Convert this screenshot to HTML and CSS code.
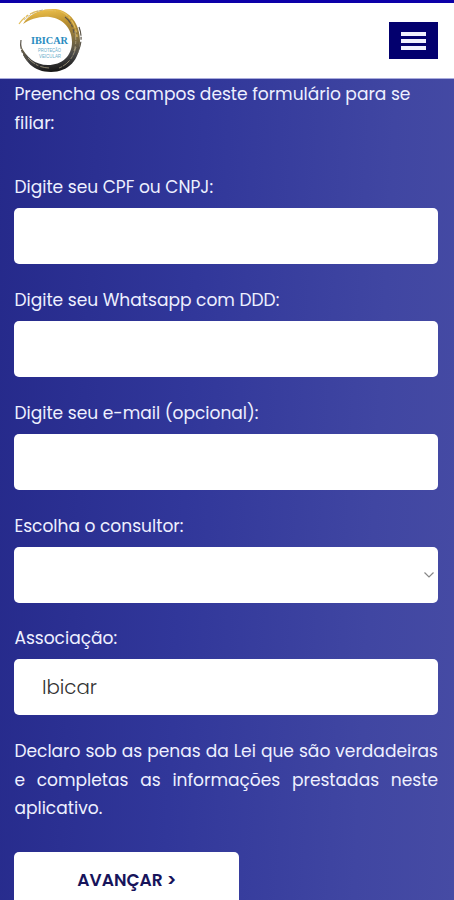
FILE: index.html
```html
<!DOCTYPE html>
<html lang="pt-BR">
<head>
  <meta charset="UTF-8" />
  <meta name="viewport" content="width=device-width, initial-scale=1.0" />
  <title>Ibicar - Filiação</title>
  <link rel="stylesheet" href="styles.css">
</head>
<body>
  <header class="header">
    <svg class="logo" viewBox="0 0 70 68" role="img" aria-label="Ibicar">
      <defs>
        <linearGradient id="ring" x1="0.4" y1="0" x2="0.5" y2="1">
          <stop offset="0" stop-color="#edc04a" />
          <stop offset="0.25" stop-color="#b98f30" />
          <stop offset="0.5" stop-color="#85713f" />
          <stop offset="0.75" stop-color="#4a4a4a" />
          <stop offset="1" stop-color="#151515" />
        </linearGradient>
      </defs>
      <!-- Brush ring -->
      <path fill="url(#ring)" d="M7 17C13 6 27 1 40 2C54 4 64 17 64 34C64 53 52 65 35 65C18 65 7 54 5 39C10 50 19 58 32 58C46 58 56 49 56 35C56 21 47 12 34 10C24 9 14 12 7 17Z" />
      <path class="bristle gold" d="M3 17C11 5 25 1 40 4M44 4C54 8 60 18 61 30" />
      <path class="bristle dark" d="M5 33Q3 44 12 54M63 20Q68 33 61 47M49 10Q56 15 58 26" />
      <path class="bristle pale" d="M59 24Q61 36 58 44M60 40Q56 56 43 61M12 51Q21 61 34 61M8 13Q16 5 27 3" />
      <text class="logo-name" x="15" y="36.5" textLength="37" lengthAdjust="spacingAndGlyphs">IBICAR</text>
      <text class="logo-sub" x="22" y="44.5" textLength="23" lengthAdjust="spacingAndGlyphs">PROTEÇÃO</text>
      <text class="logo-sub" x="23" y="51" textLength="22" lengthAdjust="spacingAndGlyphs">VEICULAR</text>
    </svg>
    <button class="menu-button" aria-label="Menu">
      <span></span>
      <span></span>
      <span></span>
    </button>
  </header>

  <form class="form">
    <p class="intro">Preencha os campos deste formulário para se filiar:</p>

    <div class="field">
      <label for="cpf">Digite seu CPF ou CNPJ:</label>
      <input type="text" id="cpf">
    </div>
    <div class="field">
      <label for="whatsapp">Digite seu Whatsapp com DDD:</label>
      <input type="text" id="whatsapp">
    </div>
    <div class="field">
      <label for="email">Digite seu e-mail (opcional):</label>
      <input type="text" id="email">
    </div>
    <div class="field">
      <label for="consultor">Escolha o consultor:</label>
      <div class="select-box">
        <select id="consultor"></select>
        <svg class="chevron" viewBox="0 0 12 8"><path d="M1.5 1.5L6 6L10.5 1.5" /></svg>
      </div>
    </div>
    <div class="field">
      <label for="associacao">Associação:</label>
      <input type="text" id="associacao" value="Ibicar">
    </div>

    <p class="terms">Declaro sob as penas da Lei que são verdadeiras e completas as informações prestadas neste aplicativo.</p>
    <button type="button" class="submit-button">AVANÇAR &gt;</button>
  </form>
</body>
</html>
```
FILE: styles.css
```css
* {
  box-sizing: border-box;
}

body {
  margin: 0;
  height: 100vh;
  overflow: hidden;
  font-family: Poppins, Inter, sans-serif;
  font-size: 17.07px;
  line-height: 28.6px;
  color: #eef0ff;
  background: linear-gradient(93deg, #25298a 0%, #31379a 42%, #4046a2 80%, #464ba4 100%);
}

/* Header */
.header {
  display: flex;
  justify-content: space-between;
  align-items: center;
  height: 79px;
  padding: 0 16px;
  background: #fff;
  border-top: 3px solid #0c00a8;
  border-bottom: 1px solid #a9abdc;
}

.logo {
  width: 70px;
  height: 68px;
}

.bristle {
  fill: none;
  stroke-width: 1.2;
  stroke-dasharray: 9 1 3 2;
}

.gold {
  stroke: #e3bd5a;
}

.dark {
  stroke: #5a5448;
}

.pale {
  stroke: #b9ad8c;
  stroke-width: 0.7;
}

.logo-name {
  font: bold 11px "Liberation Serif", serif;
  fill: #2a8cc0;
}

.logo-sub {
  font: 5.5px "Liberation Sans", sans-serif;
  fill: #69adc9;
}

.menu-button {
  display: flex;
  flex-direction: column;
  justify-content: center;
  align-items: center;
  gap: 3px;
  width: 49px;
  height: 37px;
  padding: 0;
  border: none;
  background: #03006e;
}

.menu-button span {
  width: 25px;
  height: 4px;
  background: #f0f0ff;
}

/* Form */
.form {
  padding: 1px 16px 0 14.4px;
}

p {
  margin: 0;
}

.intro {
  margin-bottom: 36px;
}

.field {
  display: flex;
  flex-direction: column;
  gap: 6px;
  margin-bottom: 21.8px;
}

.field label {
  height: 29px;
}

input,
select {
  display: block;
  width: 100%;
  height: 56px;
  padding: 0 27.5px;
  border: none;
  border-radius: 5px;
  background: #fff;
  color: #333;
  font-family: inherit;
  font-size: 19.8px;
  font-weight: 300;
}

select {
  appearance: none;
}

.select-box {
  position: relative;
}

.chevron {
  position: absolute;
  right: 3px;
  top: 24px;
  width: 12px;
  height: 8px;
  fill: none;
  stroke: #888;
  stroke-width: 1.2;
}

.terms {
  margin-bottom: 29px;
  text-align: justify;
}

.submit-button {
  width: 225px;
  height: 57px;
  border: none;
  border-radius: 5px;
  background: #fff;
  color: #17145b;
  font-family: inherit;
  font-size: 17.1px;
  font-weight: 600;
}
```
